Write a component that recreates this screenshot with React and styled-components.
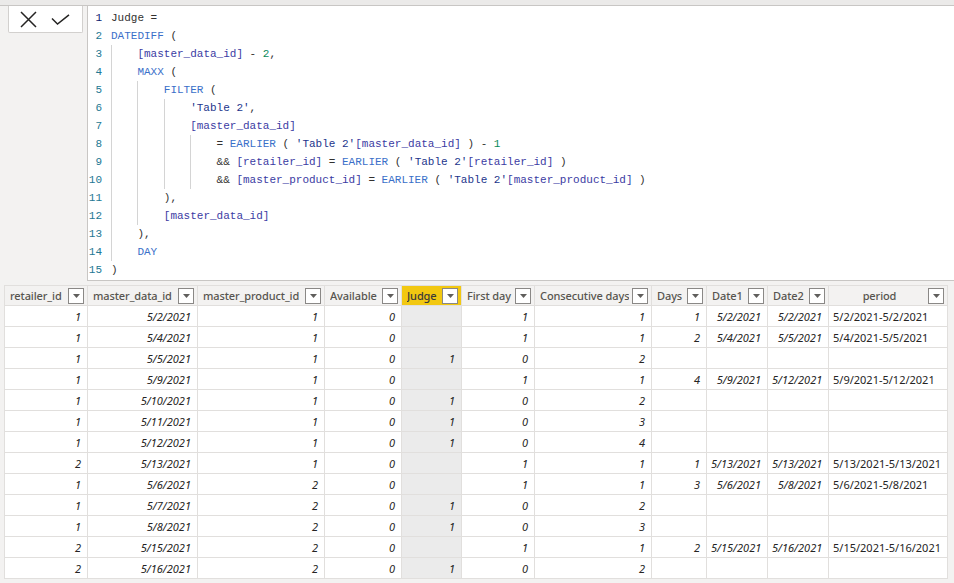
import React from 'react';
import styled, { createGlobalStyle } from 'styled-components';

const GlobalStyle = createGlobalStyle`
  html, body {
    margin: 0;
    padding: 0;
    background: #f3f2f1;
    overflow: hidden;
  }
  #root {
    width: 954px;
    height: 583px;
  }
`;

// formula lines: [indent (in units of 4 chars), tokens]
const formula = [
  [0, [['txt', 'Judge =']]],
  [0, [['kw', 'DATEDIFF'], ['txt', ' (']]],
  [1, [['col', '[master_data_id]'], ['txt', ' - '], ['num', '2'], ['txt', ',']]],
  [1, [['kw', 'MAXX'], ['txt', ' (']]],
  [2, [['kw', 'FILTER'], ['txt', ' (']]],
  [3, [['tbl', "'Table 2'"], ['txt', ',']]],
  [3, [['col', '[master_data_id]']]],
  [4, [['txt', '= '], ['kw', 'EARLIER'], ['txt', ' ( '], ['tbl', "'Table 2'"], ['col', '[master_data_id]'], ['txt', ' ) - '], ['num', '1']]],
  [4, [['txt', '&& '], ['col', '[retailer_id]'], ['txt', ' = '], ['kw', 'EARLIER'], ['txt', ' ( '], ['tbl', "'Table 2'"], ['col', '[retailer_id]'], ['txt', ' )']]],
  [4, [['txt', '&& '], ['col', '[master_product_id]'], ['txt', ' = '], ['kw', 'EARLIER'], ['txt', ' ( '], ['tbl', "'Table 2'"], ['col', '[master_product_id]'], ['txt', ' )']]],
  [2, [['txt', '),']]],
  [2, [['col', '[master_data_id]']]],
  [1, [['txt', '),']]],
  [1, [['kw', 'DAY']]],
  [0, [['txt', ')']]],
];

const tokenColors = {
  txt: '#323130',
  kw: '#3a6fc9',
  col: '#3b3ba3',
  tbl: '#22358c',
  num: '#0a8a5a',
};

const columns = [
  { key: 'retailer', title: 'retailer_id', width: 83 },
  { key: 'mdid', title: 'master_data_id', width: 110 },
  { key: 'mpid', title: 'master_product_id', width: 127 },
  { key: 'avail', title: 'Available', width: 77 },
  { key: 'judge', title: 'Judge', width: 60, selected: true },
  { key: 'first', title: 'First day', width: 73 },
  { key: 'consec', title: 'Consecutive days', width: 117 },
  { key: 'days', title: 'Days', width: 55 },
  { key: 'date1', title: 'Date1', width: 61 },
  { key: 'date2', title: 'Date2', width: 61 },
  { key: 'period', title: 'period', width: 119, text: true },
];

const raw = [
  ['1', '5/2/2021', '1', '0', '', '1', '1', '1', '5/2/2021', '5/2/2021', '5/2/2021-5/2/2021'],
  ['1', '5/4/2021', '1', '0', '', '1', '1', '2', '5/4/2021', '5/5/2021', '5/4/2021-5/5/2021'],
  ['1', '5/5/2021', '1', '0', '1', '0', '2', '', '', '', ''],
  ['1', '5/9/2021', '1', '0', '', '1', '1', '4', '5/9/2021', '5/12/2021', '5/9/2021-5/12/2021'],
  ['1', '5/10/2021', '1', '0', '1', '0', '2', '', '', '', ''],
  ['1', '5/11/2021', '1', '0', '1', '0', '3', '', '', '', ''],
  ['1', '5/12/2021', '1', '0', '1', '0', '4', '', '', '', ''],
  ['2', '5/13/2021', '1', '0', '', '1', '1', '1', '5/13/2021', '5/13/2021', '5/13/2021-5/13/2021'],
  ['1', '5/6/2021', '2', '0', '', '1', '1', '3', '5/6/2021', '5/8/2021', '5/6/2021-5/8/2021'],
  ['1', '5/7/2021', '2', '0', '1', '0', '2', '', '', '', ''],
  ['1', '5/8/2021', '2', '0', '1', '0', '3', '', '', '', ''],
  ['2', '5/15/2021', '2', '0', '', '1', '1', '2', '5/15/2021', '5/16/2021', '5/15/2021-5/16/2021'],
  ['2', '5/16/2021', '2', '0', '1', '0', '2', '', '', '', ''],
];

const CloseIcon = () => (
  <svg width="17" height="17" viewBox="0 0 17 17">
    <path d="M1 1 L16 16 M16 1 L1 16" stroke="#252423" strokeWidth="1.5" fill="none" />
  </svg>
);

const CheckIcon = () => (
  <svg width="19" height="11" viewBox="0 0 19 11">
    <path d="M1 4.5 L6.5 10 L18 0.8" stroke="#252423" strokeWidth="1.5" fill="none" />
  </svg>
);

const App = () => {
  return (
    <Page>
      <GlobalStyle />
      <TopStrip />
      <FormulaArea>
        <ButtonColumn>
          <CommitButtons>
            <IconButton><CloseIcon /></IconButton>
            <IconButton><CheckIcon /></IconButton>
          </CommitButtons>
        </ButtonColumn>
        <Editor>
          {formula.map(([indent, tokens], i) => (
            <Line key={i}>
              <LineNo $current={i === 0}>{i + 1}</LineNo>
              <Code>
                {Array.from({ length: indent }).map((_, j) => (
                  <Indent key={j} />
                ))}
                {tokens.map(([type, text], j) => (
                  <Token key={j} $type={type}>{text}</Token>
                ))}
              </Code>
            </Line>
          ))}
        </Editor>
      </FormulaArea>
      <TableWrap>
        <Grid>
          <colgroup>
            {columns.map((c) => (
              <col key={c.key} style={{ width: c.width }} />
            ))}
          </colgroup>
          <thead>
            <tr>
              {columns.map((c) => (
                <HeadCell key={c.key} $selected={c.selected}>
                  <HeadInner>
                    <HeadTitle $center={c.text}>{c.title}</HeadTitle>
                    <FilterBox>
                      <svg width="7" height="4" viewBox="0 0 7 4">
                        <path d="M0 0 L7 0 L3.5 4 Z" fill="#605e5c" />
                      </svg>
                    </FilterBox>
                  </HeadInner>
                </HeadCell>
              ))}
            </tr>
          </thead>
          <tbody>
            {raw.map((row, r) => (
              <tr key={r}>
                {row.map((v, c) => (
                  <Cell key={c} $selected={columns[c].selected} $text={columns[c].text}>
                    {v}
                  </Cell>
                ))}
              </tr>
            ))}
          </tbody>
        </Grid>
      </TableWrap>
    </Page>
  );
};

const Page = styled.div`
  width: 954px;
  height: 583px;
  background: #f3f2f1;
  display: flex;
  flex-direction: column;
  overflow: hidden;
`;

const TopStrip = styled.div`
  height: 5px;
  background: #ebeae9;
  border-bottom: 1px solid #c8c6c4;
  flex-shrink: 0;
`;

const FormulaArea = styled.div`
  display: flex;
  flex-shrink: 0;
`;

const ButtonColumn = styled.div`
  width: 87px;
  padding-left: 8px;
  box-sizing: border-box;
`;

const CommitButtons = styled.div`
  width: 75px;
  height: 27px;
  box-sizing: border-box;
  background: #ffffff;
  border: 1px solid #d2d0ce;
  border-top: none;
  border-radius: 0 0 2px 2px;
  display: flex;
  align-items: center;
  padding-left: 11px;
  gap: 14px;
`;

const IconButton = styled.div`
  display: flex;
  align-items: center;
  justify-content: center;
  width: 17px;
  height: 17px;

  &:last-child {
    width: 19px;
  }
`;

const Editor = styled.div`
  flex: 1;
  background: #ffffff;
  border-left: 1px solid #c8c6c4;
  border-bottom: 1px solid #c8c6c4;
  padding: 3px 0 1px 0;
  font-family: 'Liberation Mono', 'DejaVu Sans Mono', monospace;
  font-size: 11px;
`;

const Line = styled.div`
  display: flex;
  height: 18px;
  line-height: 18px;
  white-space: pre;
`;

const LineNo = styled.div`
  width: 14px;
  text-align: right;
  color: ${(p) => (p.$current ? '#0b216f' : '#237893')};
  flex-shrink: 0;
`;

const Code = styled.div`
  margin-left: 9px;
  display: flex;
  align-items: stretch;
`;

const Indent = styled.span`
  display: inline-block;
  width: 4ch;
  flex-shrink: 0;
  box-sizing: border-box;
  border-left: 1px solid #d4d4d4;
`;

const Token = styled.span`
  color: ${(p) => tokenColors[p.$type]};
`;

const TableWrap = styled.div`
  padding: 4px 0 0 4px;
`;

const Grid = styled.table`
  border-collapse: collapse;
  table-layout: fixed;
  width: 943px;
  background: #ffffff;
  font-family: 'Noto Sans', 'Open Sans', sans-serif;
  font-size: 11px;
`;

const HeadCell = styled.th`
  height: 19px;
  padding: 0;
  background: ${(p) => (p.$selected ? '#f2c811' : '#f3f2f1')};
  border: 1px solid #e1dfdd;
  font-weight: 500;
  letter-spacing: -0.1px;
  color: ${(p) => (p.$selected ? '#3b3a39' : '#57554f')};
  text-align: left;
`;

const HeadInner = styled.div`
  display: flex;
  align-items: center;
  padding: 0 3px 0 5px;
  gap: 3px;
`;

const HeadTitle = styled.span`
  flex: 1;
  white-space: nowrap;
  overflow: hidden;
  text-align: ${(p) => (p.$center ? 'center' : 'left')};
`;

const FilterBox = styled.span`
  width: 16px;
  height: 16px;
  box-sizing: border-box;
  border: 1px solid #8a8886;
  background: #ffffff;
  display: flex;
  align-items: center;
  justify-content: center;
  flex-shrink: 0;
`;

const Cell = styled.td`
  height: 20px;
  padding: 0 6px 0 4px;
  border: 1px solid #e1dfdd;
  background: ${(p) => (p.$selected ? '#ebebeb' : '#ffffff')};
  color: #252423;
  font-style: ${(p) => (p.$text ? 'normal' : 'italic')};
  text-align: ${(p) => (p.$text ? 'left' : 'right')};
  white-space: nowrap;
  overflow: hidden;
`;

export default App;
